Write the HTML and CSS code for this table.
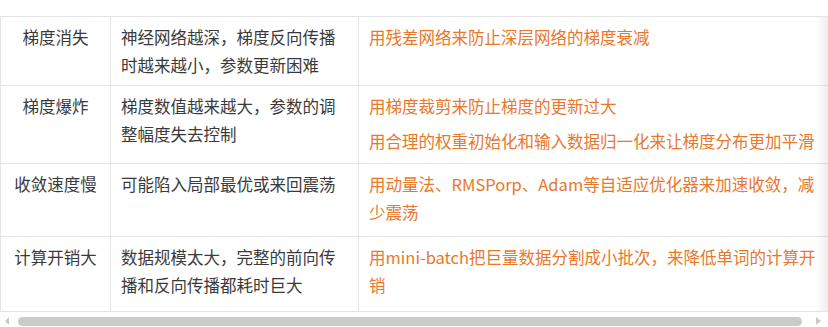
FILE: index.html
```html
<!DOCTYPE html>
<html lang="zh-CN">
<head>
<meta charset="utf-8">
<link rel="stylesheet" href="styles.css">
</head>
<body>
<div class="wrap">
  <div class="scroller">
    <table class="grid">
      <colgroup>
        <col class="c1">
        <col class="c2">
        <col class="c3">
      </colgroup>
      <tr class="r1">
        <td class="name">梯度消失</td>
        <td>神经网络越深，梯度反向传播时越来越小，参数更新困难</td>
        <td class="fix"><p>用残差网络来防止深层网络的梯度衰减</p></td>
      </tr>
      <tr class="r2">
        <td class="name">梯度爆炸</td>
        <td>梯度数值越来越大，参数的调整幅度失去控制</td>
        <td class="fix"><p>用梯度裁剪来防止梯度的更新过大</p><p>用合理的权重初始化和输入数据归一化来让梯度分布更加平滑</p></td>
      </tr>
      <tr class="r3">
        <td class="name">收敛速度慢</td>
        <td>可能陷入局部最优或来回震荡</td>
        <td class="fix"><p>用动量法、RMSPorp、Adam等自适应优化器来加速收敛，减少震荡</p></td>
      </tr>
      <tr class="r4">
        <td class="name">计算开销大</td>
        <td>数据规模太大，完整的前向传播和反向传播都耗时巨大</td>
        <td class="fix"><p>用mini-batch把巨量数据分割成小批次，来降低单词的计算开销</p></td>
      </tr>
    </table>
  </div>
  <div class="fade"></div>
  <div class="scrollbar">
    <span class="arrow left"></span>
    <span class="thumb"></span>
    <span class="arrow right"></span>
  </div>
</div>
</body>
</html>
```
FILE: styles.css
```css
html, body {
  margin: 0;
  padding: 0;
  background: #ffffff;
}
body {
  font-family: "Noto Sans CJK SC", "Noto Sans", sans-serif;
  font-size: 16.5px;
  color: #3a3a3a;
}
.wrap {
  position: relative;
  width: 828px;
  height: 327px;
  padding-top: 16px;
  box-sizing: border-box;
  overflow: hidden;
}
.scroller {
  width: 828px;
  overflow: hidden;
}
.grid {
  border-collapse: collapse;
  table-layout: fixed;
  width: 836px;
}
.c1 { width: 110px; }
.c2 { width: 248px; }
.c3 { width: 478px; }
.grid td {
  border: 1px solid #e4e4e4;
  padding: 6px 10px;
  vertical-align: top;
  line-height: 28px;
}
.grid td.name {
  text-align: center;
  padding-left: 4px;
  padding-right: 4px;
}
.grid td.fix {
  color: #e8782c;
}
.fix p {
  margin: 0;
}
.fix p + p {
  margin-top: 7px;
}
.r1 { height: 68px; }
.r2 { height: 78px; }
.r3 { height: 73px; }
.r4 { height: 75px; }
.fade {
  position: absolute;
  top: 17px;
  right: 0;
  width: 12px;
  height: 294px;
  background: linear-gradient(to right, rgba(0,0,0,0), rgba(0,0,0,0.07));
}
.scrollbar {
  display: flex;
  align-items: center;
  height: 14px;
  margin-top: 2px;
}
.arrow {
  width: 0;
  height: 0;
  border-top: 4px solid transparent;
  border-bottom: 4px solid transparent;
}
.arrow.left {
  margin-left: 5px;
  border-right: 4px solid #c9c9c9;
}
.arrow.right {
  margin-left: 14px;
  border-left: 5px solid #c9c9c9;
}
.thumb {
  height: 9px;
  width: 784px;
  margin-left: 9px;
  border-radius: 5px;
  background: #cbcbcb;
}
```
